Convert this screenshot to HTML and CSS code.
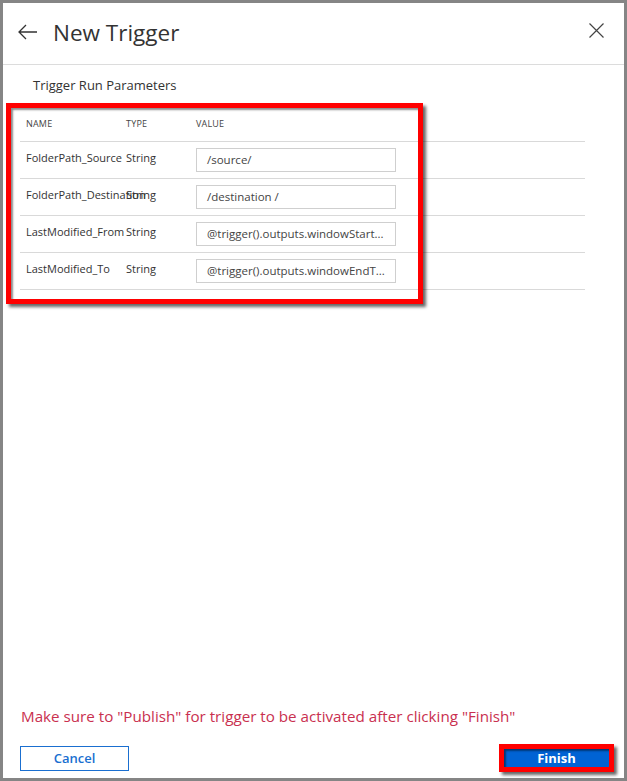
FILE: index.html
```html
<!DOCTYPE html>
<html>
<head>
<meta charset="utf-8">
<link rel="stylesheet" href="styles.css">
</head>
<body>
<div class="panel">
  <div class="header">
    <svg class="back" width="20" height="16" viewBox="0 0 20 16"><path d="M8 1 L1 8 L8 15 M1 8 H19" fill="none" stroke="#333" stroke-width="1.3"/></svg>
    <h1 class="title">New Trigger</h1>
    <svg class="close" width="15" height="15" viewBox="0 0 15 15"><path d="M0.5 0.5 L14.5 14.5 M14.5 0.5 L0.5 14.5" fill="none" stroke="#444" stroke-width="1.2"/></svg>
  </div>
  <div class="content">
    <div class="subtitle">Trigger Run Parameters</div>
    <div class="table">
      <div class="row head">
        <div class="c-name">NAME</div><div class="c-type">TYPE</div><div class="c-val">VALUE</div>
      </div>
      <div class="row">
        <div class="c-name">FolderPath_Source</div><div class="c-type">String</div><div class="c-val"><div class="input">/source/</div></div>
      </div>
      <div class="row">
        <div class="c-name">FolderPath_Destination</div><div class="c-type">String</div><div class="c-val"><div class="input">/destination /</div></div>
      </div>
      <div class="row">
        <div class="c-name">LastModified_From</div><div class="c-type">String</div><div class="c-val"><div class="input">@trigger().outputs.windowStart...</div></div>
      </div>
      <div class="row">
        <div class="c-name">LastModified_To</div><div class="c-type">String</div><div class="c-val"><div class="input">@trigger().outputs.windowEndT...</div></div>
      </div>
    </div>
    <div class="highlight"></div>
  </div>
  <div class="footer">
    <div class="message">Make sure to "Publish" for trigger to be activated after clicking "Finish"</div>
    <div class="buttons">
      <button class="btn cancel">Cancel</button>
      <button class="btn finish">Finish</button>
    </div>
  </div>
</div>
</body>
</html>
```
FILE: styles.css
```css
html, body {
  margin: 0;
  padding: 0;
}
body {
  background: #858585;
  width: 627px;
  height: 781px;
  font-family: "Open Sans", "Noto Sans", sans-serif;
  color: #333;
}
.panel {
  margin: 3px;
  width: 621px;
  height: 775px;
  background: #fff;
  display: flex;
  flex-direction: column;
  position: relative;
}
.header {
  height: 62px;
  box-sizing: border-box;
  border-bottom: 1px solid #dcdcdc;
  display: flex;
  align-items: center;
  padding: 0 20px 0 15px;
}
.back {
  display: block;
  margin-top: -4px;
}
.title {
  margin: -2px 0 0 15px;
  font-size: 22.5px;
  font-weight: 400;
  color: #333;
  flex: 1;
}
.close {
  display: block;
  margin-top: -6px;
}
.content {
  position: relative;
  padding: 11px 0 0 17px;
}
.subtitle {
  font-size: 13px;
  line-height: 18px;
  color: #333;
  padding-left: 13px;
  margin-bottom: 11px;
}
.table {
  width: 565px;
}
.row {
  display: grid;
  grid-template-columns: 100px 70px 200px;
  height: 37px;
  box-sizing: border-box;
  border-bottom: 1px solid #d9d9d9;
  align-items: center;
  padding-left: 6px;
}
.row .c-name, .row .c-type {
  font-size: 11px;
  color: #333;
  white-space: nowrap;
  align-self: start;
  padding-top: 8px;
}
.row .c-name {
  overflow: visible;
}
.row.head .c-name, .row.head .c-type, .row.head .c-val {
  font-size: 9px;
  padding-top: 0;
  align-self: center;
  color: #444;
  letter-spacing: 0.2px;
}
.input {
  height: 24px;
  box-sizing: border-box;
  border: 1px solid #cfcfcf;
  font-size: 11.5px;
  color: #444;
  line-height: 22px;
  padding-left: 10px;
  white-space: nowrap;
  overflow: hidden;
}
.highlight {
  position: absolute;
  left: 3px;
  top: 38px;
  width: 417px;
  height: 201px;
  box-sizing: border-box;
  border: 5px solid #ff0000;
  box-shadow: 3px 3px 3px rgba(0,0,0,0.6), inset 2px 2px 2px rgba(0,0,0,0.45);
  pointer-events: none;
}
.footer {
  margin-top: auto;
  padding: 0 0 6px 17px;
}
.message {
  font-size: 15.2px;
  color: #c9304f;
  padding-left: 1px;
  margin-bottom: 18px;
}
.buttons {
  display: flex;
  justify-content: space-between;
  align-items: center;
  padding-right: 10px;
}
.btn {
  font-family: "Open Sans", "Noto Sans", sans-serif;
  font-size: 13px;
  font-weight: 600;
  cursor: pointer;
  box-sizing: border-box;
}
.cancel {
  width: 109px;
  height: 25px;
  background: #fff;
  border: 1px solid #1a6fd0;
  color: #1a6fd0;
  padding: 0;
}
.finish {
  width: 115px;
  height: 28px;
  background: #0063d4;
  border: 5px solid #ff0000;
  color: #fff;
  font-weight: 700;
  padding: 0;
  box-shadow: 3px 3px 3px rgba(0,0,0,0.6), inset 2px 2px 2px rgba(0,0,0,0.45);
}
```
